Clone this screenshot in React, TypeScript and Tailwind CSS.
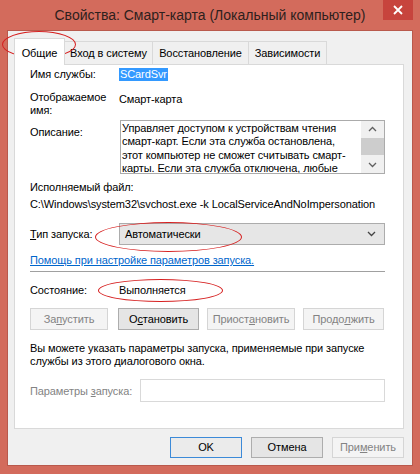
import React from "react";

const F = { fontFamily: '"Liberation Sans", Arial, sans-serif' };

function Btn({ children, disabled, def, w }: { children: React.ReactNode; disabled?: boolean; def?: boolean; w: string }) {
  return (
    <div
      className={
        "flex items-center justify-center border " +
        w +
        " " +
        (disabled
          ? "border-[#d5d5d5] bg-[#f4f4f4] text-[#838383]"
          : def
          ? "border-[#3c8ad8] bg-[#ebebeb] text-black"
          : "border-[#adadad] bg-[#e5e5e5] text-black")
      }
    >
      {children}
    </div>
  );
}

export default function App() {
  return (
    <div className="relative h-[474px] w-[420px] overflow-hidden bg-[#d36b5c]" style={F}>
      {/* title bar */}
      <div className="relative flex h-[30px] items-center justify-center">
        <span className="text-[14px] text-[#2e1f1d]">Свойства: Смарт-карта (Локальный компьютер)</span>
        <div className="absolute right-[7px] top-0 flex h-[20px] w-[30px] items-center justify-center bg-[#c7443d]">
          <svg width="10" height="10" viewBox="0 0 10 10">
            <path d="M1 1 L9 9 M9 1 L1 9" stroke="white" strokeWidth="1.8" />
          </svg>
        </div>
      </div>

      {/* body */}
      <div className="mx-[7px] flex h-[436px] flex-col border border-[#b9594c] bg-[#f0f0f0] px-[6px] text-[11px] tracking-[-0.1px] text-black">
        {/* tabs */}
        <div className="mt-[7px] flex items-end">
          <div className="relative z-10 -mb-px flex h-[27px] w-[51px] items-start justify-center border border-b-0 border-[#d9d9d9] bg-white pt-[6px]">
            Общие
          </div>
          <div className="flex h-[23px] w-[88px] items-center justify-center border border-b-0 border-l-0 border-[#d9d9d9] bg-[#f0f0f0]">
            Вход в систему
          </div>
          <div className="flex h-[23px] w-[96px] items-center justify-center border border-b-0 border-l-0 border-[#d9d9d9] bg-[#f0f0f0]">
            Восстановление
          </div>
          <div className="flex h-[23px] w-[78px] items-center justify-center border border-b-0 border-l-0 border-[#d9d9d9] bg-[#f0f0f0]">
            Зависимости
          </div>
        </div>

        {/* panel */}
        <div className="flex h-[365px] w-[390px] flex-col border border-[#d9d9d9] bg-white pl-[15px] pr-[18px] leading-[14px]">
          <div className="mt-[2px] flex items-center">
            <span className="w-[89px]">Имя службы:</span>
            <span className="bg-[#3399ff] px-px leading-[13px] text-white">SCardSvr</span>
          </div>
          <div className="mt-[10px] flex">
            <span className="w-[89px] leading-[13px]">
              Отображаемое
              <br />
              имя:
            </span>
            <span className="mt-[2px] leading-[13px]">Смарт-карта</span>
          </div>
          <div className="mt-[3px] flex">
            <span className="mt-[5px] w-[90px]">Описание:</span>
            <div className="flex h-[54px] flex-1 border border-[#ababab]">
              <div className="flex-1 overflow-hidden whitespace-nowrap pl-[1px] pt-[1px] leading-[13.3px]">
                Управляет доступом к устройствам чтения
                <br />
                смарт-карт. Если эта служба остановлена,
                <br />
                этот компьютер не сможет считывать смарт-
                <br />
                карты. Если эта служба отключена, любые
              </div>
              <div className="flex w-[23px] flex-col items-center bg-[#f0f0f0]">
                <svg width="23" height="17" viewBox="0 0 23 17">
                  <path d="M8 10 L11.5 6.5 L15 10" stroke="#606060" strokeWidth="1.3" fill="none" />
                </svg>
                <div className="h-[17px] w-[23px] bg-[#cdcdcd]" />
                <div className="flex-1" />
                <svg width="23" height="17" viewBox="0 0 23 17">
                  <path d="M8 7 L11.5 10.5 L15 7" stroke="#606060" strokeWidth="1.3" fill="none" />
                </svg>
              </div>
            </div>
          </div>
          <div className="mt-[6px]">Исполняемый файл:</div>
          <div className="mt-[3px] whitespace-nowrap">C:\Windows\system32\svchost.exe -k LocalServiceAndNoImpersonation</div>

          <div className="mt-[12px] flex items-center">
            <span className="w-[89px]">
              <span className="underline">Т</span>ип запуска:
            </span>
            <div className="flex h-[22px] flex-1 items-center justify-between border border-[#acacac] bg-[#e6e6e6] pl-[5px] pr-[8px]">
              <span>Автоматически</span>
              <svg width="9" height="6" viewBox="0 0 9 6">
                <path d="M1 1 L4.5 4.5 L8 1" stroke="#444" strokeWidth="1.3" fill="none" />
              </svg>
            </div>
          </div>
          <div className="mt-[8px] text-[#0066cc] underline">Помощь при настройке параметров запуска.</div>
          <div className="mt-[4px] h-px bg-[#a0a0a0]" />

          <div className="mt-[11px] flex items-center">
            <span className="w-[89px]">Состояние:</span>
            <span>Выполняется</span>
          </div>
          <div className="mt-[11px] flex h-[22px]">
            <Btn disabled w="w-[78px]">
              За<span className="underline">п</span>устить
            </Btn>
            <div className="w-[10px]" />
            <Btn w="w-[81px]">
              О<span className="underline">с</span>тановить
            </Btn>
            <div className="w-[8px]" />
            <Btn disabled w="w-[88px]">
              Приост<span className="underline">а</span>новить
            </Btn>
            <div className="w-[8px]" />
            <Btn disabled w="w-[81px]">
              Продо<span className="underline">л</span>жить
            </Btn>
          </div>
          <div className="mt-[12px] whitespace-nowrap leading-[13px]">
            Вы можете указать параметры запуска, применяемые при запуске
            <br />
            службы из этого диалогового окна.
          </div>
          <div className="mt-[11px] flex items-center">
            <span className="w-[110px] whitespace-nowrap text-[#838383]">
              Параметры <span className="underline">з</span>апуска:
            </span>
            <div className="h-[23px] flex-1 border border-[#d9d9d9] bg-white" />
          </div>
        </div>

        {/* footer buttons */}
        <div className="mt-[8px] flex h-[21px] justify-end gap-[9px] pr-[2px]">
          <Btn def w="w-[72px]">OK</Btn>
          <Btn w="w-[72px]">Отмена</Btn>
          <Btn disabled w="w-[72px]">
            При<span className="underline">м</span>енить
          </Btn>
        </div>
      </div>

      {/* annotation ellipses */}
      <div className="pointer-events-none absolute left-[2px] top-[31px] h-[27px] w-[74px] rounded-[50%] border border-[#d62020]" />
      <div className="pointer-events-none absolute left-[95px] top-[222px] h-[30px] w-[147px] rounded-[50%] border border-[#d62020]" />
      <div className="pointer-events-none absolute left-[98px] top-[279px] h-[23px] w-[125px] rounded-[50%] border border-[#d62020]" />
    </div>
  );
}
